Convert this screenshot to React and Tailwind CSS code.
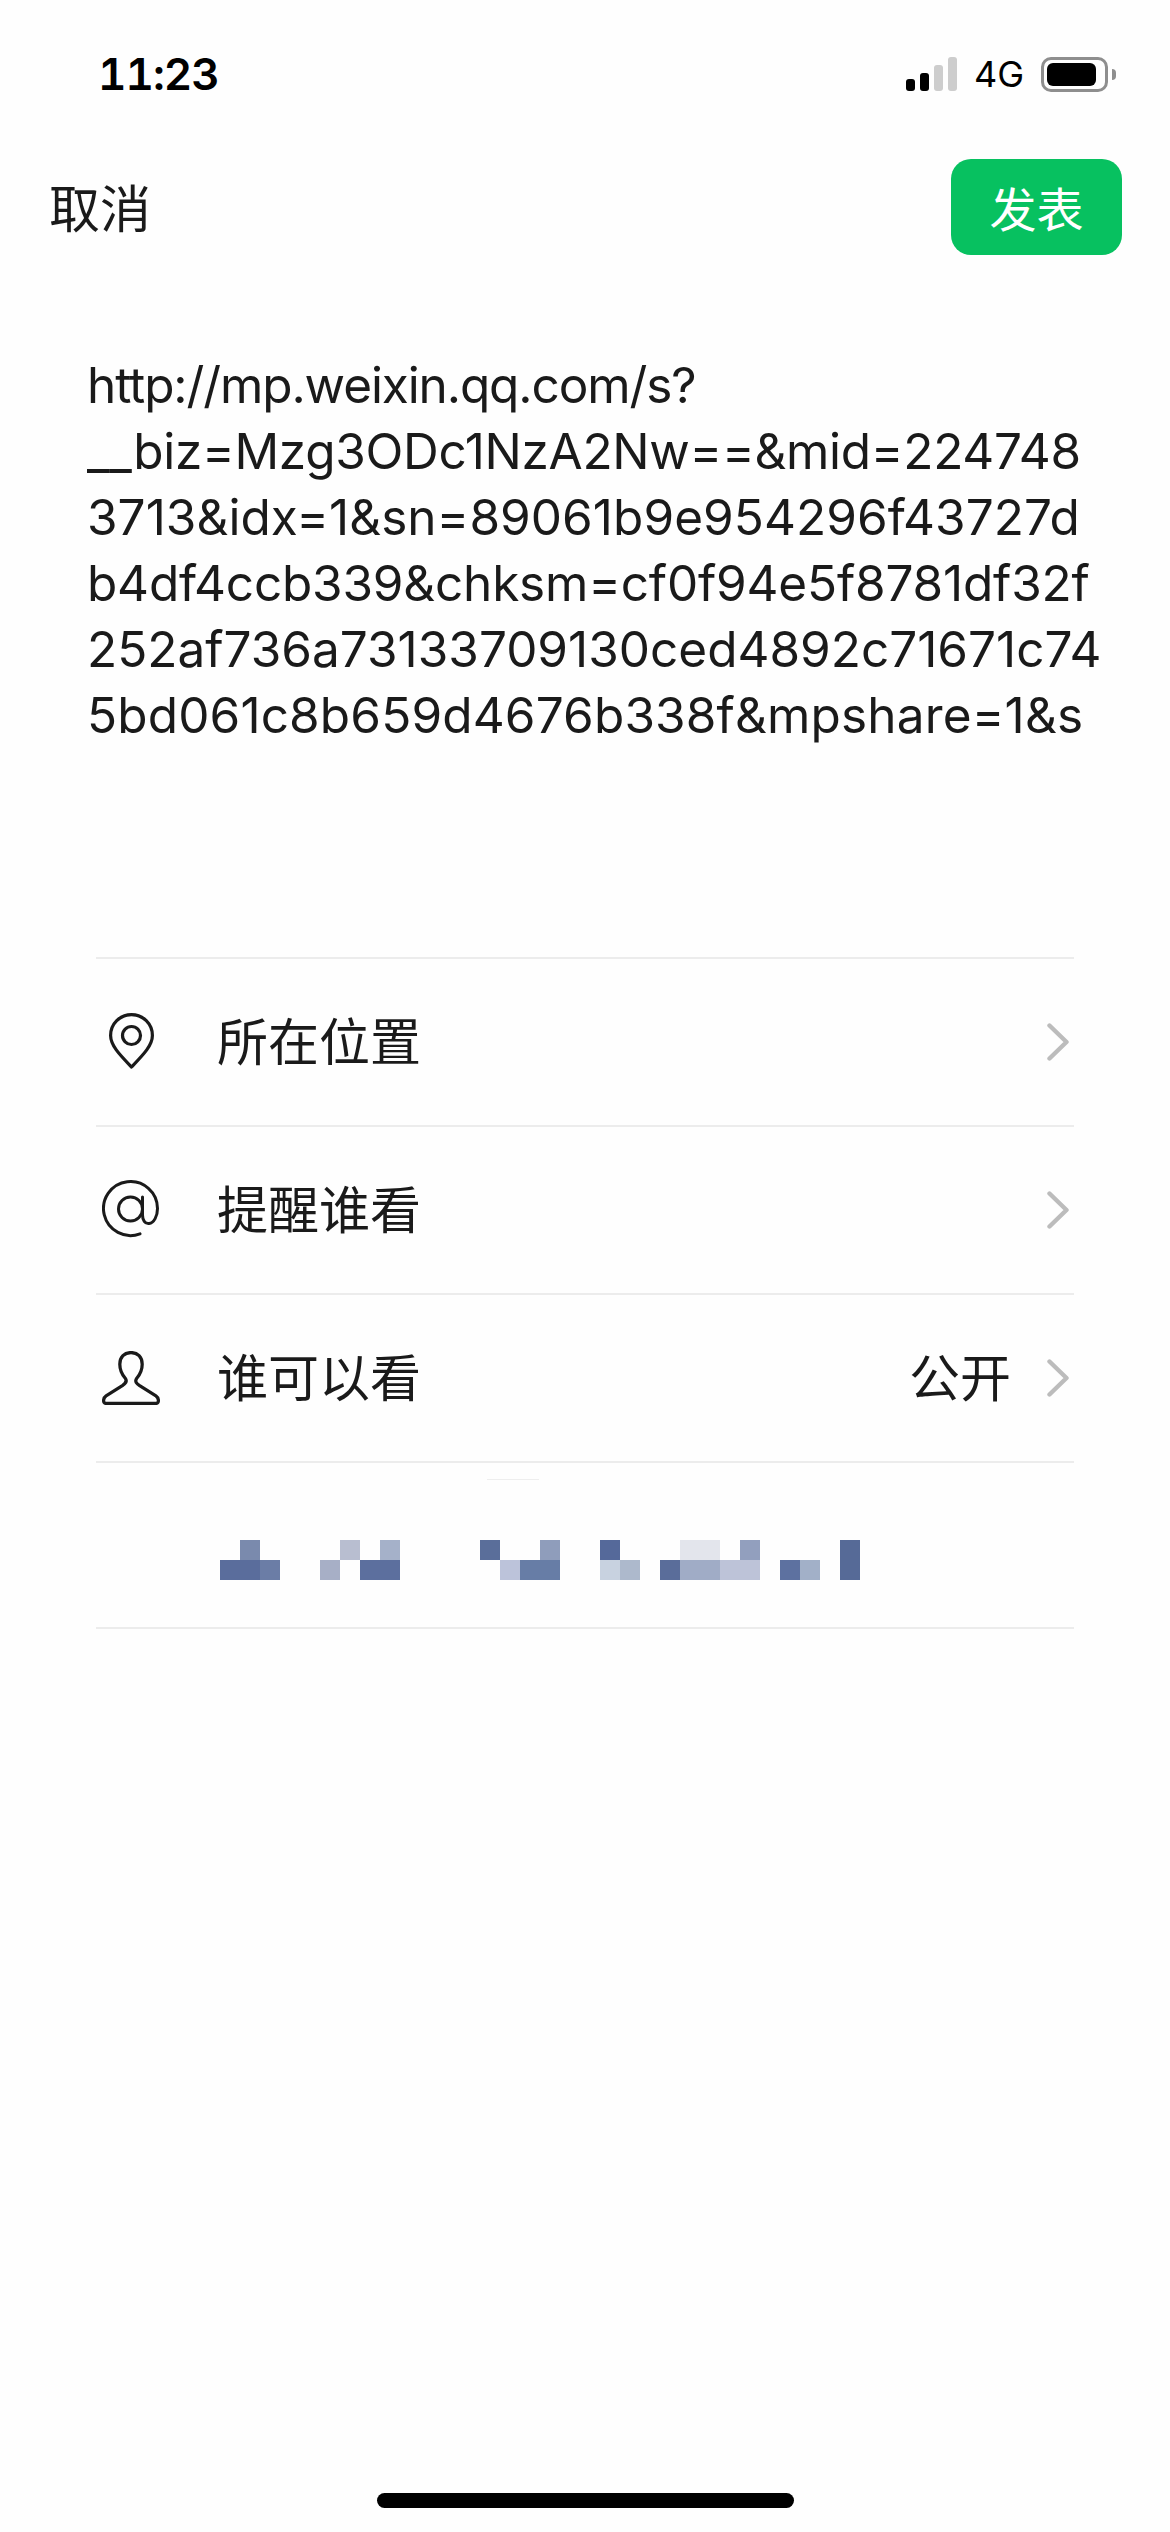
// the long link wraps at these points; a little tracking keeps each line end where it should be
const URL_LINES = [
    ['http://mp.weixin.qq.com/s?', 'tracking-[-1.1px]'],
    ['__biz=Mzg3ODc1NzA2Nw==&mid=224748', 'tracking-[-0.3px]'],
    ['3713&idx=1&sn=89061b9e954296f43727d', 'tracking-[0.05px]'],
    ['b4df4ccb339&chksm=cf0f94e5f8781df32f', 'tracking-[-0.2px]'],
    ['252af736a73133709130ced4892c71671c74', 'tracking-normal'],
    ['5bd061c8b659d4676b338f&mpshare=1&s', 'tracking-[0.15px]'],
]

// pixelated link text, one row of 20px cells
const TOP_CELLS = {
    1: 'bg-[#7a8aad]', 6: 'bg-[#b8bed0]', 8: 'bg-[#a5b1c9]', 13: 'bg-[#5a6e9a]', 16: 'bg-[#8f9dbb]',
    19: 'bg-[#55699a]', 23: 'bg-[#e3e5ec]', 24: 'bg-[#e3e5ec]', 26: 'bg-[#929fbe]', 31: 'bg-[#566a97]',
}
const BOTTOM_CELLS = {
    0: 'bg-[#5a6d9c]', 1: 'bg-[#5a6d9c]', 2: 'bg-[#6b7da6]', 5: 'bg-[#a7afc6]', 7: 'bg-[#5c6f9e]', 8: 'bg-[#5c6f9e]',
    14: 'bg-[#bcc3da]', 15: 'bg-[#677da6]', 16: 'bg-[#677da6]', 19: 'bg-[#c8d2e0]', 20: 'bg-[#adb9cc]',
    22: 'bg-[#5a6d9a]', 23: 'bg-[#a0acc6]', 24: 'bg-[#a0acc6]', 25: 'bg-[#bdc3d8]', 26: 'bg-[#bdc3d8]',
    28: 'bg-[#5d71a0]', 29: 'bg-[#a2b0c8]', 31: 'bg-[#566a97]',
}

function PixelRow({ cells }) {
    return (
        <div className="flex">
            {Array.from({ length: 32 }, (_, i) => (
                <div key={i} className={`w-5 h-5 ${cells[i] || ''}`} />
            ))}
        </div>
    )
}

function PinIcon() {
    return (
        <svg width="45" height="56" viewBox="0 0 45 56" fill="none" stroke="#1a1a1a" strokeWidth="3.2" className="-mt-[2px]">
            <path d="M22.5 54C12 43 1.6 33 1.6 22.5A20.9 20.9 0 0 1 43.4 22.5C43.4 33 33 43 22.5 54Z" strokeLinejoin="round" />
            <circle cx="22.5" cy="22.5" r="9" />
        </svg>
    )
}

function AtIcon() {
    return (
        <svg width="58" height="58" viewBox="0 0 58 58" fill="none" stroke="#1a1a1a" strokeWidth="3" strokeLinecap="round" className="-mt-[2px]">
            <circle cx="28.5" cy="29" r="12" />
            <path d="M40.5 17V35C40.5 40 43 44 47 43.5C52 43 55.5 36 55.5 28.5A27 27 0 1 0 38 53.8" />
        </svg>
    )
}

function PersonIcon() {
    return (
        <svg width="58" height="54" viewBox="0 0 57 53" fill="none" stroke="#1a1a1a" strokeWidth="3.2" strokeLinejoin="round">
            <path d="M28.5 1.5C22 1.5 17.5 6 17.5 13C17.5 19 19.5 23 23 27C25 30 23 32 20 34L4 44C1 46 .5 51.5 4 51.5H53C56.5 51.5 56 46 53 44L37 34C34 32 32 30 34 27C37.5 23 39.5 19 39.5 13C39.5 6 35 1.5 28.5 1.5Z" />
        </svg>
    )
}

function Chevron() {
    return (
        <svg width="22" height="38" viewBox="0 0 22 38" fill="none" stroke="#bcbcbc" strokeWidth="4.4" strokeLinecap="round" strokeLinejoin="round" className="ml-[36px] mr-[5px]">
            <path d="M2.5 2.5L19.5 19L2.5 35.5" />
        </svg>
    )
}

function OptionRow({ icon, label, value }) {
    return (
        <div className="h-[168px] border-t-2 border-[#ececec] flex items-center">
            <div className="w-[70px] mr-[51px] flex justify-center">{icon}</div>
            <span className="text-[51px] leading-none text-[#1a1a1a] flex-1">{label}</span>
            {value && <span className="text-[51px] leading-none text-[#1a1a1a]">{value}</span>}
            <Chevron />
        </div>
    )
}

export default function App() {
    return (
        <div className="w-[1170px] h-[2532px] bg-[#fefefe] flex flex-col font-['Inter','Noto_Sans_CJK_SC',sans-serif]">
            {/* status bar */}
            <div className="h-[50px] mt-[49px] flex items-center justify-between text-black">
                <span className="ml-[98px] text-[44px] font-semibold leading-none tabular-nums tracking-[-1px]">11:23</span>
                <div className="flex items-center mr-[54px]">
                    <div className="flex items-end gap-[5px] h-[34px]">
                        <div className="w-[9px] h-[12px] rounded-[3px] bg-black" />
                        <div className="w-[9px] h-[18px] rounded-[3px] bg-black" />
                        <div className="w-[9px] h-[26px] rounded-[3px] bg-[#cdcdcd]" />
                        <div className="w-[9px] h-[34px] rounded-[3px] bg-[#cdcdcd]" />
                    </div>
                    <span className="ml-[17px] text-[36px] leading-none">4G</span>
                    <div className="ml-[17px] w-[67px] h-[35px] border-[3px] border-[#8e8e8e] rounded-[10px] p-[3px]">
                        <div className="w-[49px] h-full bg-black rounded-[6px]" />
                    </div>
                    <div className="ml-[4px] w-[4px] h-[11px] bg-[#8e8e8e] rounded-r-full" />
                </div>
            </div>

            {/* nav */}
            <div className="mt-[60px] h-[96px] flex items-center justify-between pl-[49px] pr-[48px]">
                <span className="text-[51px] leading-none text-[#1a1a1a] pt-[4px]">取消</span>
                <button className="w-[171px] h-[96px] rounded-[20px] bg-[#07c160] text-white text-[47px] leading-none pt-[4px]">发表</button>
            </div>

            {/* link text */}
            <div className="mt-[97px] ml-[87px] text-[49.5px] leading-[66px] text-[#1a1a1a] whitespace-nowrap">
                {URL_LINES.map(([line, tracking]) => (
                    <div key={line} className={tracking}>{line}</div>
                ))}
            </div>

            {/* options */}
            <div className="mt-[209px] mx-[96px]">
                <OptionRow icon={<PinIcon />} label="所在位置" />
                <OptionRow icon={<AtIcon />} label="提醒谁看" />
                <OptionRow icon={<PersonIcon />} label="谁可以看" value="公开" />
                <div className="h-[168px] border-y-2 border-[#ececec]">
                    <div className="w-[52px] h-px bg-[#eeeeee] ml-[391px] mt-[16px]" />
                    <div className="ml-[124px] mt-[60px]">
                        <PixelRow cells={TOP_CELLS} />
                        <PixelRow cells={BOTTOM_CELLS} />
                    </div>
                </div>
            </div>

            {/* home indicator */}
            <div className="mt-auto mb-[24px] mx-auto w-[417px] h-[15px] rounded-full bg-black" />
        </div>
    )
}
